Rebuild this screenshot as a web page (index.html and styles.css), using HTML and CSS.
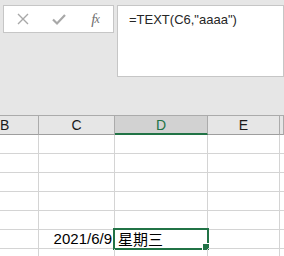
FILE: index.html
```html
<!DOCTYPE html>
<html>
<head>
<meta charset="utf-8">
<link rel="stylesheet" href="styles.css">
</head>
<body>
<div class="top">
  <div class="tools">
    <span class="ico">
      <svg width="14" height="14" viewBox="0 0 14 14"><path d="M2 2 L12 12 M12 2 L2 12" stroke="#a8a8a8" stroke-width="1.4" fill="none"/></svg>
    </span>
    <span class="ico">
      <svg width="16" height="14" viewBox="0 0 16 14"><path d="M2 7.5 L6 11.5 L14 3" stroke="#a8a8a8" stroke-width="2.2" fill="none"/></svg>
    </span>
    <span class="ico fx"><i>f</i><i class="x">x</i></span>
  </div>
  <div class="formula">=TEXT(C6,"aaaa")</div>
</div>
<div class="sheet">
  <div class="row head">
    <div class="c cb">B</div>
    <div class="c cc">C</div>
    <div class="c cd sel">D</div>
    <div class="c ce">E</div>
    <div class="c cf"></div>
  </div>
  <div class="row"><div class="c cb"></div><div class="c cc"></div><div class="c cd"></div><div class="c ce"></div><div class="c cf"></div></div>
  <div class="row"><div class="c cb"></div><div class="c cc"></div><div class="c cd"></div><div class="c ce"></div><div class="c cf"></div></div>
  <div class="row"><div class="c cb"></div><div class="c cc"></div><div class="c cd"></div><div class="c ce"></div><div class="c cf"></div></div>
  <div class="row"><div class="c cb"></div><div class="c cc"></div><div class="c cd"></div><div class="c ce"></div><div class="c cf"></div></div>
  <div class="row"><div class="c cb"></div><div class="c cc"></div><div class="c cd"></div><div class="c ce"></div><div class="c cf"></div></div>
  <div class="row"><div class="c cb"></div><div class="c cc num">2021/6/9</div><div class="c cd active"><span class="txt">星期三</span><span class="handle"></span></div><div class="c ce"></div><div class="c cf"></div></div>
  <div class="row"><div class="c cb"></div><div class="c cc"></div><div class="c cd"></div><div class="c ce"></div><div class="c cf"></div></div>
</div>
</body>
</html>
```
FILE: styles.css
```css
html, body {
  margin: 0;
  padding: 0;
}
body {
  width: 284px;
  height: 256px;
  overflow: hidden;
  background: #ffffff;
  font-family: "Liberation Sans", "Noto Sans CJK SC", sans-serif;
}
.top {
  height: 115px;
  background: #e6e6e6;
  display: flex;
  align-items: flex-start;
  padding: 5px 0 0 3px;
  box-sizing: border-box;
  gap: 3px;
}
.tools {
  width: 111px;
  height: 28px;
  box-sizing: border-box;
  border: 1px solid #c6c6c6;
  background: #ffffff;
  display: flex;
  align-items: center;
}
.ico {
  width: 36px;
  display: flex;
  justify-content: center;
  align-items: center;
}
.ico:first-child { margin-left: 1px; }
.fx {
  font-family: "Liberation Serif", serif;
  color: #707070;
  font-size: 15px;
  letter-spacing: -1px;
}
.fx .x { font-size: 12px; }
.formula {
  width: 167px;
  height: 72px;
  box-sizing: border-box;
  border: 1px solid #c6c6c6;
  background: #ffffff;
  padding: 6px 0 0 11px;
  font-size: 13px;
  color: #262626;
}
.sheet {
  border-top: 1px solid #ababab;
}
.row {
  display: flex;
  height: 19px;
}
.c {
  box-sizing: border-box;
  height: 19px;
  border-right: 1px solid #d4d4d4;
  border-bottom: 1px solid #d4d4d4;
  font-size: 15px;
  line-height: 18px;
  color: #000;
  position: relative;
}
.cb { width: 39px; }
.cc { width: 76px; }
.cd { width: 93px; }
.ce { width: 72px; }
.cf { width: 4px; border-right: none; }
.head .c {
  background: #e6e6e6;
  border-bottom: 1px solid #9e9e9e;
  border-right: 1px solid #ababab;
  text-align: center;
  font-size: 14px;
  line-height: 19px;
  color: #1a1a1a;
}
.head .cb { text-align: left; }
.head .sel {
  background: #d2d2d2;
  border-bottom: 2px solid #217346;
  color: #217346;
}
.num {
  text-align: right;
  padding-right: 2px;
}
.active .txt {
  position: absolute;
  left: 3px;
  top: 0;
  line-height: 19px;
  font-size: 15px;
}
.active::before {
  content: "";
  position: absolute;
  left: -2px;
  top: -2px;
  width: 96px;
  height: 22px;
  box-sizing: border-box;
  border: 2px solid #217346;
}
.handle {
  position: absolute;
  right: -3px;
  bottom: -3px;
  width: 6px;
  height: 6px;
  background: #217346;
  border: 1px solid #ffffff;
  box-sizing: content-box;
}
```
